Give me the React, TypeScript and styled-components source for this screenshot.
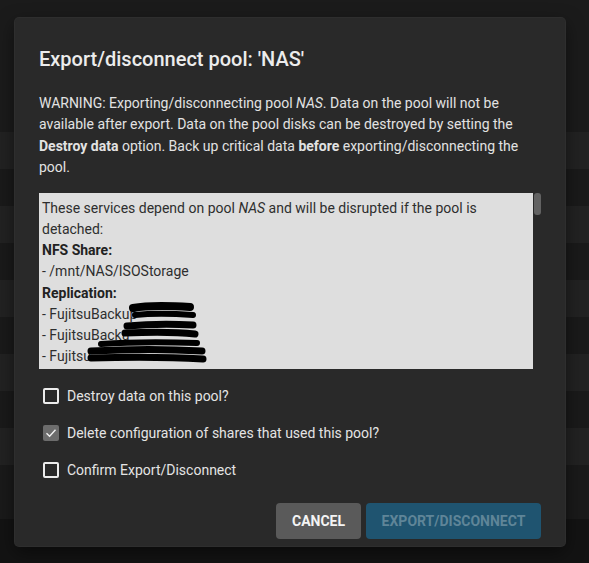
import React from "react";
import styled, { createGlobalStyle } from "styled-components";

const GlobalStyle = createGlobalStyle`
  html, body {
    margin: 0;
    padding: 0;
    background: #1b1b1b;
    font-family: Roboto, "Liberation Sans", sans-serif;
  }
`;

const rows = [0, 1, 2, 3, 4, 5, 6, 7, 8, 9];

const replications = ["FujitsuBackup", "FujitsuBacku", "Fujitsu", "FujitsuBackup"];

const options = [
  { label: "Destroy data on this pool?", checked: false },
  { label: "Delete configuration of shares that used this pool?", checked: true },
  { label: "Confirm Export/Disconnect", checked: false },
];

const App = () => {
  return (
    <>
      <GlobalStyle />
      <Page>
        <Backdrop>
          <TopArea />
          {rows.map((i) => (
            <TableRow key={i} $alt={i % 2 === 0} />
          ))}
          <TableRow $alt={false} $short />
          <Footer />
        </Backdrop>

        <Dialog>
          <Title>Export/disconnect pool: 'NAS'</Title>
          <Warning>
            WARNING: Exporting/disconnecting pool <em>NAS</em>. Data on the pool will not be
            available after export. Data on the pool disks can be destroyed by setting the{" "}
            <b>Destroy data</b> option. Back up critical data <b>before</b> exporting/disconnecting
            the pool.
          </Warning>

          <ServicesWrap>
            <ServicesBox>
              <Line>
                These services depend on pool <em>NAS</em> and will be disrupted if the pool is
                detached:
              </Line>
              <Line>
                <b>NFS Share:</b>
              </Line>
              <Line>- /mnt/NAS/ISOStorage</Line>
              <Line>
                <b>Replication:</b>
              </Line>
              {replications.map((r, i) => (
                <Line key={i}>- {r}</Line>
              ))}
              <Redaction width="200" height="176" viewBox="0 0 200 176">
                <g stroke="#000" strokeLinecap="round" fill="none">
                  <path d="M94 115 C110 112 135 113 151 114" strokeWidth="8" />
                  <path d="M96 122 C115 120 140 121 154 122" strokeWidth="6" />
                  <path d="M88 133 C110 131 135 131 154 132" strokeWidth="7" />
                  <path d="M86 140 C110 139 138 139 156 141" strokeWidth="7" />
                  <path d="M62 151 C90 149 130 149 158 150" strokeWidth="6" />
                  <path d="M52 158 C90 156 130 156 163 158" strokeWidth="7" />
                  <path d="M52 165 C90 164 130 164 164 166" strokeWidth="7" />
                </g>
              </Redaction>
            </ServicesBox>
            <ScrollTrack>
              <ScrollThumb />
            </ScrollTrack>
          </ServicesWrap>

          <Options>
            {options.map((o) => (
              <OptionRow key={o.label}>
                <Box $checked={o.checked}>
                  {o.checked && (
                    <svg width="12" height="12" viewBox="0 0 12 12">
                      <path d="M1.5 6.2 L4.6 9.2 L10.5 2.8" stroke="#f2f2f2" strokeWidth="1.4" fill="none" />
                    </svg>
                  )}
                </Box>
                <OptionLabel>{o.label}</OptionLabel>
              </OptionRow>
            ))}
          </Options>

          <Actions>
            <Button $variant="cancel">CANCEL</Button>
            <Button $variant="primary" disabled>
              EXPORT/DISCONNECT
            </Button>
          </Actions>
        </Dialog>
      </Page>
    </>
  );
};

export default App;

const Page = styled.div`
  position: relative;
  width: 589px;
  height: 563px;
  overflow: hidden;
  background: #1b1b1b;
`;

const Backdrop = styled.div`
  display: flex;
  flex-direction: column;
  height: 100%;
`;

const TopArea = styled.div`
  height: 132px;
  background: #1b1b1b;
`;

const TableRow = styled.div<{ $alt: boolean; $short?: boolean }>`
  height: ${(p) => (p.$short ? "17px" : "37px")};
  flex-shrink: 0;
  background: ${(p) => (p.$alt ? "#222222" : "#1a1a1a")};
`;

const Footer = styled.div`
  flex: 1;
  background: #131313;
`;

const Dialog = styled.div`
  position: absolute;
  left: 15px;
  top: 18px;
  width: 550px;
  height: 528px;
  box-sizing: border-box;
  padding: 25px 24px 7px;
  background: #292929;
  border-radius: 4px;
  box-shadow: 0 0 0 1px #2e2e2e, 0 6px 18px rgba(0, 0, 0, 0.5);
  display: flex;
  flex-direction: column;
`;

const Title = styled.h2`
  margin: 0;
  font-size: 20px;
  line-height: 32px;
  font-weight: 500;
  color: #ececec;
`;

const Warning = styled.p`
  margin: 18px 0 0;
  font-size: 14px;
  line-height: 21.3px;
  color: #e2e2e2;

  b {
    font-weight: 700;
  }
`;

const ServicesWrap = styled.div`
  margin-top: 15px;
  display: flex;
  height: 176px;
  flex-shrink: 0;
`;

const ServicesBox = styled.div`
  position: relative;
  flex: 1;
  overflow: hidden;
  background: #dedede;
  padding: 5px 3px 0;
  color: #2e2e2e;
  font-size: 14px;
  line-height: 21.1px;
`;

const Line = styled.div`
  b {
    font-weight: 700;
    color: #222;
  }
`;

const Redaction = styled.svg`
  position: absolute;
  left: 0;
  top: 0;
`;

const ScrollTrack = styled.div`
  width: 8px;
  display: flex;
  justify-content: center;
`;

const ScrollThumb = styled.div`
  width: 7px;
  height: 22px;
  border-radius: 3px;
  background: #626262;
`;

const Options = styled.div`
  margin-top: 8px;
  display: flex;
  flex-direction: column;
`;

const OptionRow = styled.label`
  height: 37px;
  display: flex;
  align-items: center;
  padding-left: 4px;
  gap: 8px;
`;

const Box = styled.span<{ $checked: boolean }>`
  width: 16px;
  height: 16px;
  box-sizing: border-box;
  border-radius: 2px;
  display: flex;
  align-items: center;
  justify-content: center;
  border: ${(p) => (p.$checked ? "none" : "2px solid #ececec")};
  background: ${(p) => (p.$checked ? "#6c6c6c" : "transparent")};
`;

const OptionLabel = styled.span`
  font-size: 14px;
  color: #e4e4e4;
`;

const Actions = styled.div`
  margin-top: auto;
  display: flex;
  justify-content: flex-end;
  gap: 5px;
`;

const Button = styled.button<{ $variant: "cancel" | "primary" }>`
  height: 36px;
  border: none;
  border-radius: 4px;
  font-family: Roboto, "Liberation Sans", sans-serif;
  font-size: 14px;
  font-weight: 700;
  padding: 0 12px;
  cursor: pointer;
  width: ${(p) => (p.$variant === "cancel" ? "85px" : "175px")};
  background: ${(p) => (p.$variant === "cancel" ? "#5a5a5a" : "#1f5470")};
  color: ${(p) => (p.$variant === "cancel" ? "#f4f4f4" : "#5f8598")};
`;
